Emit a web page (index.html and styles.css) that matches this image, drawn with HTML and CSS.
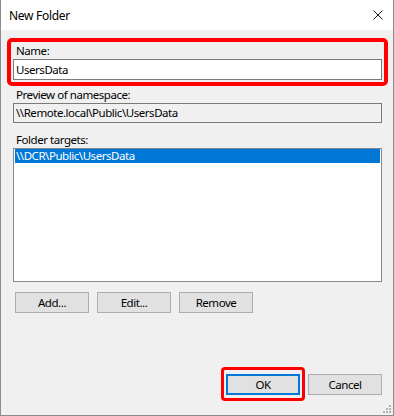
FILE: index.html
```html
<!DOCTYPE html>
<html lang="en">

<head>
  <meta charset="UTF-8">
  <title>New Folder</title>
  <link rel="stylesheet" href="styles.css">
</head>

<body>
  <div class="window">
    <div class="titlebar">
      <span class="title">New Folder</span>
      <svg class="close" width="10" height="10" viewBox="0 0 10 10">
        <path d="M0.5 0.5 L9.5 9.5 M9.5 0.5 L0.5 9.5" stroke="#1a1a1a" stroke-width="1" fill="none" />
      </svg>
    </div>

    <div class="content">
      <div class="field nameField">
        <label class="label">Name:</label>
        <div class="textbox">UsersData</div>
        <div class="mark markName"></div>
      </div>

      <div class="field">
        <label class="label">Preview of namespace:</label>
        <div class="textbox readonly">\\Remote.local\Public\UsersData</div>
      </div>

      <div class="field targets">
        <label class="label">Folder targets:</label>
        <div class="listbox">
          <div class="row selected">\\DCR\Public\UsersData</div>
        </div>
      </div>

      <div class="buttonArea">
        <button class="btn">Add...</button>
        <button class="btn">Edit...</button>
        <button class="btn">Remove</button>
      </div>

      <div class="dialogButtons">
        <div class="okWrap">
          <button class="btn default">OK</button>
          <div class="mark markOk"></div>
        </div>
        <button class="btn">Cancel</button>
      </div>
    </div>

    <svg class="grip" width="10" height="10" viewBox="0 0 10 10">
      <g fill="#b4b4b4">
        <rect x="7" y="1" width="2" height="2" />
        <rect x="4" y="4" width="2" height="2" />
        <rect x="7" y="4" width="2" height="2" />
        <rect x="1" y="7" width="2" height="2" />
        <rect x="4" y="7" width="2" height="2" />
        <rect x="7" y="7" width="2" height="2" />
      </g>
    </svg>
  </div>
</body>

</html>
```

FILE: styles.css
```css
body {
  margin: 0;
  font-family: "Segoe UI", "Noto Sans", sans-serif;
  font-size: 11.5px;
  letter-spacing: -0.45px;
  color: #000;
}

.window {
  position: relative;
  width: 394px;
  height: 416px;
  box-sizing: border-box;
  border: 1px solid #8c8c8c;
  border-top: none;
  background: #f0f0f0;
  display: flex;
  flex-direction: column;
}

.titlebar {
  height: 30px;
  flex: none;
  background: #fff;
  display: flex;
  align-items: center;
  justify-content: space-between;
  padding: 0 10px 0 8px;
}

.title {
  line-height: 30px;
  margin-top: 1px;
  font-size: 12px;
  letter-spacing: -0.3px;
}

.close {
  display: block;
}

.content {
  flex: 1;
  display: flex;
  flex-direction: column;
  padding: 12px 11px 20px 12px;
}

.field {
  position: relative;
}

.label {
  display: block;
  line-height: 17px;
  padding-left: 3px;
}

.textbox {
  height: 21px;
  box-sizing: border-box;
  border: 1px solid #7a7a7a;
  background: #fff;
  padding-left: 2px;
  line-height: 19px;
  white-space: nowrap;
}

.readonly {
  height: 20px;
  line-height: 18px;
  background: #f0f0f0;
}

.field + .field {
  margin-top: 6px;
}

.field.targets {
  margin-top: 8px;
}

.listbox {
  height: 134px;
  box-sizing: border-box;
  border: 1px solid #828790;
  background: #fff;
  padding: 0 1px;
}

.row {
  height: 14px;
  line-height: 14px;
  padding-left: 1px;
}

.selected {
  background: #0078d7;
  color: #fff;
}

.buttonArea {
  display: flex;
  gap: 8px;
  margin-top: 10px;
  padding-left: 2px;
}

.btn {
  width: 74px;
  height: 21px;
  box-sizing: border-box;
  border: 1px solid #adadad;
  background: #e1e1e1;
  font-family: inherit;
  font-size: inherit;
  letter-spacing: inherit;
  color: #000;
  padding: 0;
  line-height: 19px;
}

.btn.default {
  border: 2px solid #0078d7;
  line-height: 17px;
}

.dialogButtons {
  margin-top: auto;
  display: flex;
  justify-content: flex-end;
  gap: 8px;
}

.okWrap {
  position: relative;
  display: flex;
}

/* red highlight frames drawn over the dialog */
.mark {
  position: absolute;
  border: 4px solid #ff0000;
  border-radius: 5px;
  pointer-events: none;
}

.markName {
  top: -4px;
  left: -6px;
  right: -6px;
  bottom: -6px;
}

.markOk {
  top: -7px;
  left: -5px;
  right: -5px;
  bottom: -6px;
  border-width: 3px;
  border-radius: 4px;
}

.grip {
  position: absolute;
  right: 1px;
  bottom: 1px;
}
```
